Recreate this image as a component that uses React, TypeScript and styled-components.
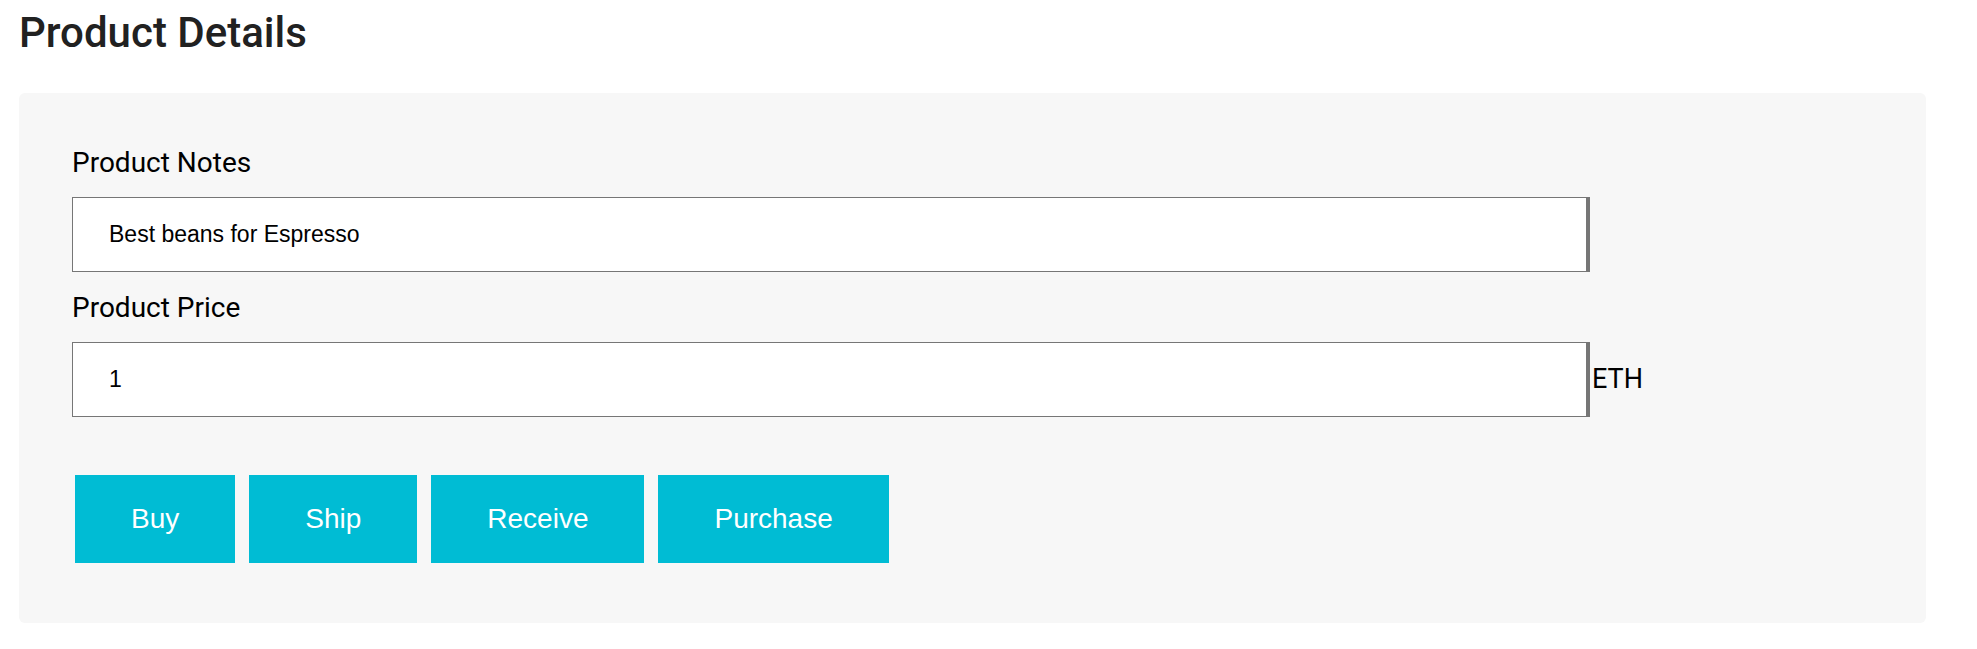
import React from "react";
import styled, { createGlobalStyle } from "styled-components";

const Global = createGlobalStyle`
  html, body { margin: 0; padding: 0; background: #ffffff; }
  body { font-family: Roboto, "Liberation Sans", sans-serif; }
  * { box-sizing: border-box; }
`;

const Page = styled.div`
  padding: 8px 51px 26px 19px;
`;

const Title = styled.h1`
  margin: 0 0 36px 0;
  font-family: Roboto, sans-serif;
  font-weight: 500;
  font-size: 42px;
  line-height: 49px;
  color: #212121;
`;

const Panel = styled.section`
  background: #f7f7f7;
  border-radius: 6px;
  padding: 53px 53px 60px 53px;
`;

const Label = styled.label`
  display: block;
  font-family: Roboto, sans-serif;
  font-size: 28px;
  line-height: 33px;
  color: #000;
  margin-bottom: 18px;
`;

const Row = styled.div<{ $mb?: number }>`
  display: flex;
  align-items: center;
  margin-bottom: ${(p) => p.$mb ?? 19}px;
`;

const Field = styled.input`
  width: 1518px;
  height: 75px;
  border: 1px solid #767676;
  border-right: 4px solid #767676;
  background: #fff;
  padding: 0 0 0 36px;
  font-family: "Liberation Sans", Arial, sans-serif;
  font-size: 23px;
  color: #000;
  outline: none;
  margin: 0;
`;

const Unit = styled.span`
  font-family: Roboto, sans-serif;
  font-size: 27px;
  line-height: 31px;
  color: #000;
  margin-left: 2px;
`;

const Actions = styled.div`
  display: flex;
  gap: 14px;
  padding-left: 3px;
`;

const ActionButton = styled.button`
  background: #00bcd4;
  color: #fff;
  border: none;
  padding: 0 56px;
  height: 88px;
  font-family: "Liberation Sans", Arial, sans-serif;
  font-size: 28px;
  cursor: pointer;
`;

export default function App() {
  return (
    <Page>
      <Global />
      <Title>Product Details</Title>
      <Panel>
        <Label>Product Notes</Label>
        <Row>
          <Field defaultValue="Best beans for Espresso" />
        </Row>
        <Label>Product Price</Label>
        <Row $mb={58}>
          <Field defaultValue="1" />
          <Unit>ETH</Unit>
        </Row>
        <Actions>
          {["Buy", "Ship", "Receive", "Purchase"].map((t) => (
            <ActionButton key={t}>{t}</ActionButton>
          ))}
        </Actions>
      </Panel>
    </Page>
  );
}
